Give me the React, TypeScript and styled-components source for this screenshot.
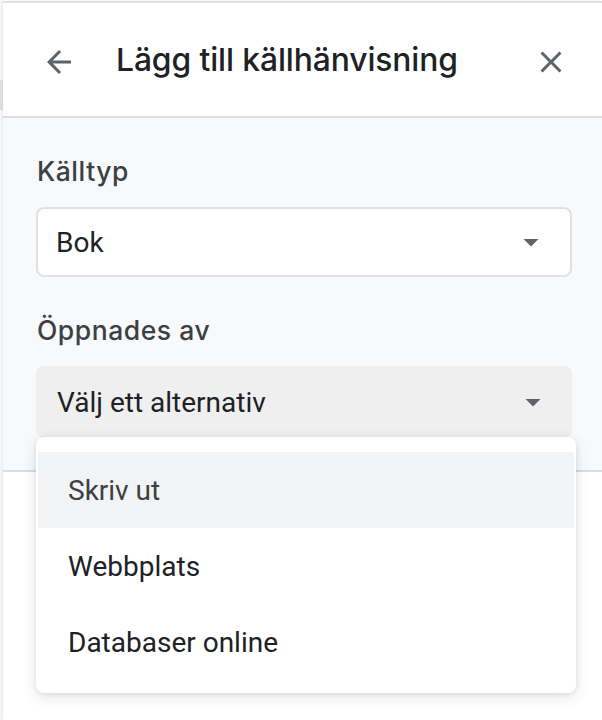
import React from "react";
import styled, { createGlobalStyle } from "styled-components";

const GlobalStyle = createGlobalStyle`
  html, body {
    margin: 0;
    padding: 0;
    background: #ffffff;
  }
  * { box-sizing: border-box; }
`;

const Page = styled.div`
  display: flex;
  min-height: 100vh;
  background: #ffffff;
`;

const EdgeStrip = styled.div`
  width: 3px;
  flex: none;
  display: flex;
  flex-direction: column;
  background: #f6f7f8;
`;

const EdgeTab = styled.div`
  margin-top: 80px;
  height: 30px;
  background: #dfe1e4;
`;

const Panel = styled.div`
  flex: 1;
  display: flex;
  flex-direction: column;
  margin-top: 1px;
  border-top: 2px solid #dcdee2;
  box-shadow: -1px 0 2px rgba(60, 64, 67, 0.08);
  background: #ffffff;
`;

const Header = styled.header`
  display: flex;
  align-items: center;
  height: 115px;
  padding: 5px 33px 0 38px;
  border-bottom: 2px solid #dadce0;
  background: #ffffff;
`;

const IconButton = styled.button`
  width: 36px;
  height: 36px;
  padding: 0;
  border: none;
  background: transparent;
  display: flex;
  align-items: center;
  justify-content: center;
  color: #5f6368;
  cursor: pointer;
  flex: none;
`;

const Title = styled.h1`
  flex: 1;
  margin: 0 0 6px 39px;
  font-family: Inter, "Noto Sans", sans-serif;
  font-weight: 500;
  font-size: 31.8px;
  letter-spacing: -0.1px;
  color: #202124;
  white-space: nowrap;
`;

const Body = styled.div`
  display: flex;
  flex-direction: column;
  gap: 37px;
  padding: 37px 30px 32px 33px;
  background: #f8f9fa;
  border-bottom: 2px solid #dadce0;
`;

const Field = styled.div`
  display: flex;
  flex-direction: column;
  gap: 20px;
  position: relative;
`;

const Label = styled.div`
  font-family: Inter, "Noto Sans", sans-serif;
  font-weight: 500;
  font-size: 26.5px;
  line-height: 32px;
  letter-spacing: 0.55px;
  color: #3c4043;
  padding-left: 1px;
`;

const Select = styled.div<{ $filled?: boolean }>`
  display: flex;
  align-items: center;
  justify-content: space-between;
  height: ${(p) => (p.$filled ? "72px" : "70px")};
  padding: 0 21px 0 ${(p) => (p.$filled ? "21px" : "18px")};
  border-radius: 8px;
  border: ${(p) => (p.$filled ? "none" : "2px solid #dfe1e5")};
  background: ${(p) => (p.$filled ? "#efefef" : "#ffffff")};
  font-family: Roboto, "Liberation Sans", sans-serif;
  font-size: 28px;
  color: #202124;
`;

const Caret = styled.svg`
  width: 36px;
  height: 36px;
  fill: #5f6368;
  flex: none;
`;

const Menu = styled.ul`
  position: absolute;
  left: 0;
  top: 123px;
  width: 540px;
  margin: 0;
  padding: 15px 2px 13px;
  list-style: none;
  background: #ffffff;
  border-radius: 8px;
  box-shadow: 0 4px 14px rgba(60, 64, 67, 0.14), 0 1px 4px rgba(60, 64, 67, 0.1);
  z-index: 2;
`;

const MenuItem = styled.li<{ $active?: boolean }>`
  display: flex;
  align-items: center;
  height: 76px;
  padding-left: 30px;
  background: ${(p) => (p.$active ? "#f1f3f4" : "transparent")};
  font-family: Roboto, "Liberation Sans", sans-serif;
  font-size: 28px;
  color: ${(p) => (p.$active ? "#3c4043" : "#202124")};
`;

const Footer = styled.div`
  flex: 1;
  background: #ffffff;
`;

const BackIcon = () => (
  <svg width="36" height="36" viewBox="0 0 24 24" fill="currentColor">
    <path d="M20 11H7.83l5.59-5.59L12 4l-8 8 8 8 1.41-1.41L7.83 13H20v-2z" />
  </svg>
);

const CloseIcon = () => (
  <svg width="36" height="36" viewBox="0 0 24 24" fill="currentColor">
    <path d="M19 6.41L17.59 5 12 10.59 6.41 5 5 6.41 10.59 12 5 17.59 6.41 19 12 13.41 17.59 19 19 17.59 13.41 12z" />
  </svg>
);

const DropCaret = () => (
  <Caret viewBox="0 0 24 24">
    <path d="M7 10l5 5 5-5z" />
  </Caret>
);

const accessOptions = ["Skriv ut", "Webbplats", "Databaser online"];

export default function App() {
  return (
    <>
      <GlobalStyle />
      <Page>
        <EdgeStrip>
          <EdgeTab />
        </EdgeStrip>
        <Panel>
          <Header>
            <IconButton aria-label="Tillbaka">
              <BackIcon />
            </IconButton>
            <Title>Lägg till källhänvisning</Title>
            <IconButton aria-label="Stäng">
              <CloseIcon />
            </IconButton>
          </Header>
          <Body>
            <Field>
              <Label>Källtyp</Label>
              <Select>
                <span>Bok</span>
                <DropCaret />
              </Select>
            </Field>
            <Field>
              <Label>Öppnades av</Label>
              <Select $filled>
                <span>Välj ett alternativ</span>
                <DropCaret />
              </Select>
              <Menu role="listbox">
                {accessOptions.map((opt, i) => (
                  <MenuItem key={opt} $active={i === 0}>
                    {opt}
                  </MenuItem>
                ))}
              </Menu>
            </Field>
          </Body>
          <Footer />
        </Panel>
      </Page>
    </>
  );
}
